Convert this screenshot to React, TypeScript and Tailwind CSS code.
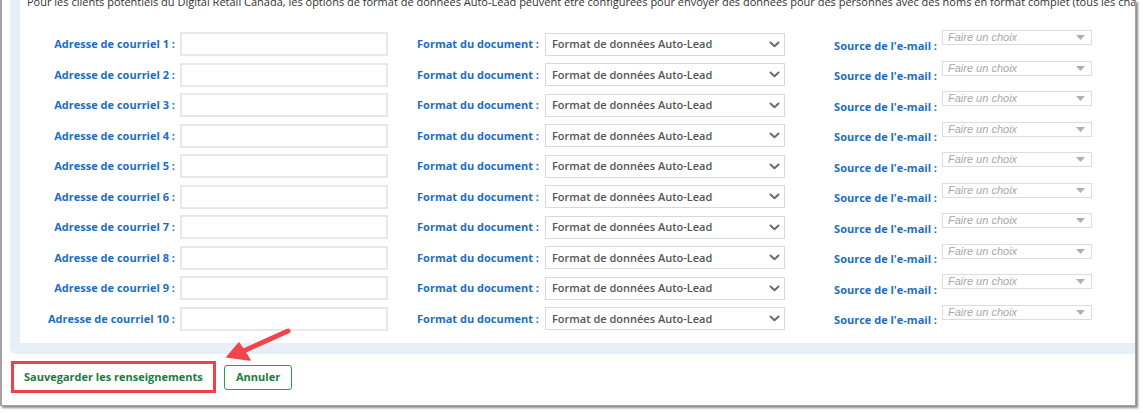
import React from "react";

const rows = [1, 2, 3, 4, 5, 6, 7, 8, 9, 10];

function Chevron() {
  return (
    <svg width="11" height="7" viewBox="0 0 11 7" className="mr-[4px] shrink-0">
      <path d="M1.5 1.5 L5.5 5.2 L9.5 1.5" fill="none" stroke="#6b6b6b" strokeWidth="2" strokeLinecap="round" strokeLinejoin="round" />
    </svg>
  );
}

function Row({ n }: { n: number }) {
  return (
    <div className="flex items-center h-[30.5px]">
      <div className="w-[160px] pr-[5px] text-right text-[11px] font-bold text-[#1b6ec2] whitespace-nowrap">
        Adresse de courriel {n} :
      </div>
      <div className="w-[208px] h-[24px] border-2 border-[#e8e8e8] bg-white" />
      <div className="w-[157px] pr-[6px] text-right text-[11px] font-bold text-[#1b6ec2] whitespace-nowrap">
        Format du document :
      </div>
      <div className="w-[240px] h-[23px] border border-[#d9d9d9] bg-white flex items-center justify-between pl-[6px]">
        <span className="text-[11px] font-semibold text-[#555] whitespace-nowrap">Format de données Auto-Lead</span>
        <Chevron />
      </div>
      <div className="w-[157px] pr-[5px] text-right text-[11px] font-bold text-[#1b6ec2] whitespace-nowrap pt-[3px]">
        Source de l'e-mail :
      </div>
      <div className="self-start mt-[1px] w-[150px] h-[15px] border border-[#dcdcdc] bg-white flex items-center justify-between pl-[5px] pr-[6px]">
        <span className="text-[11px] italic text-[#a8a8a8] leading-none whitespace-nowrap" style={{ fontFamily: '"Liberation Sans", Arial, sans-serif' }}>
          Faire un choix
        </span>
        <svg width="9" height="5" viewBox="0 0 9 5">
          <path d="M0 0 L9 0 L4.5 5 Z" fill="#b0b0b0" />
        </svg>
      </div>
    </div>
  );
}

export default function App() {
  return (
    <div className="w-[1143px] h-[413px] bg-white" style={{ fontFamily: '"Open Sans", "Noto Sans", sans-serif' }}>
      <div className="relative w-[1136px] h-[406px] bg-white border-l-2 border-r border-b border-[#a3a3a3] overflow-hidden shadow-[2px_2px_2px_rgba(0,0,0,0.45)]">
        <div className="pl-[8px]">
          <div className="w-[1150px] bg-[#e7eef7] pl-[10px] pb-[11px] rounded-bl-[6px]">
            <div className="bg-white pl-[7px] pb-[9px]">
              <div className="-mt-[6px] h-[15px] leading-[15px] text-[11px] text-[#333] whitespace-nowrap">
                Pour les clients potentiels du Digital Retail Canada, les options de format de données Auto-Lead peuvent être configurées pour envoyer des données pour des personnes avec des noms en format complet (tous les champs)
              </div>
              <div className="-ml-[7px] pt-[20px]">
                {rows.map((n) => (
                  <Row key={n} n={n} />
                ))}
              </div>
            </div>
          </div>
        </div>
        <div className="flex items-center gap-[8px] pl-[9px] pt-[7px]">
          <div className="border-[3px] border-[#f2404a] h-[32px] w-[205px] flex items-center pl-[10px]">
            <span className="text-[11px] font-bold text-[#1d7a3e] whitespace-nowrap">Sauvegarder les renseignements</span>
          </div>
          <button className="h-[25px] px-[11px] border border-[#2f9a52] rounded-[3px] text-[11px] font-bold text-[#1d7a3e] bg-white">
            Annuler
          </button>
        </div>
        <svg className="absolute left-[215px] top-[320px]" width="85" height="48" viewBox="0 0 85 48">
          <path d="M71 11 L22 33" stroke="#f2444b" strokeWidth="5" strokeLinecap="round" />
          <path d="M10 37 L22 23 L33 40 Z" fill="#f2444b" stroke="#f2444b" strokeWidth="1.5" strokeLinejoin="round" />
        </svg>
      </div>
    </div>
  );
}
